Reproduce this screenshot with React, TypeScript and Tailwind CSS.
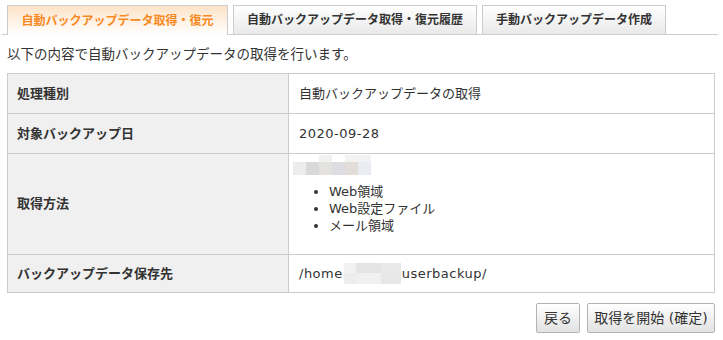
import React from 'react';

const tabs = [
  { label: '自動バックアップデータ取得・復元', active: true, w: 'w-[221px]' },
  { label: '自動バックアップデータ取得・復元履歴', active: false, w: 'w-[244px]' },
  { label: '手動バックアップデータ作成', active: false, w: 'w-[184px]' },
];

// mosaic used to hide private text in the original screen
const Mosaic: React.FC<{ rows: string[][]; cell: number }> = ({ rows, cell }) => (
  <div className="flex flex-col">
    {rows.map((r, i) => (
      <div key={i} className="flex">
        {r.map((c, j) => (
          <div key={j} style={{ width: cell, height: i === 0 ? 7 : 13, background: c }} />
        ))}
      </div>
    ))}
  </div>
);

const Row: React.FC<{ label: string; h: string; children: React.ReactNode }> = ({ label, h, children }) => (
  <div className={`flex border-t border-[#cccccc] first:border-t-0 ${h}`}>
    <div className="w-[281px] shrink-0 bg-[#f0f0f0] border-r border-[#cccccc] flex items-center pl-[9px] font-bold text-[#333]">
      {label}
    </div>
    <div className="flex-1 flex items-center pl-[10px] text-[#333]">{children}</div>
  </div>
);

const App: React.FC = () => {
  return (
    <div
      className="w-[723px] h-[340px] bg-white text-[13px] text-[#333]"
      style={{ fontFamily: '"DejaVu Sans", "Noto Sans CJK JP", sans-serif' }}
    >
      {/* tabs */}
      <div className="pt-[5px] ml-[2px] w-[716px] h-[35px] border-b border-[#cccccc] flex items-start gap-[5px] pl-[5px]">
        {tabs.map((t) => (
          <div
            key={t.label}
            className={
              (t.active
                ? 'h-[30px] bg-gradient-to-b from-[#fde3c8] to-white text-[#f7891f] '
                : 'h-[29px] bg-gradient-to-b from-white to-[#e9e9e9] text-[#333] ') +
              t.w +
              ' shrink-0 flex items-center justify-center border border-b-0 border-[#cccccc] font-bold text-[12px] whitespace-nowrap'
            }
          >
            {t.label}
          </div>
        ))}
      </div>

      <p className="px-[7px] mt-[9px] h-[20px] leading-[20px] text-[13.5px] whitespace-nowrap">
        以下の内容で自動バックアップデータの取得を行います。
      </p>

      <div className="mx-[7px] mt-[9px] w-[708px] border border-[#cccccc]">
        <Row label="処理種別" h="h-[39px]">自動バックアップデータの取得</Row>
        <Row label="対象バックアップ日" h="h-[40px]">
          <span className="tracking-[0.5px]">2020-09-28</span>
        </Row>
        <Row label="取得方法" h="h-[101px]">
          <div className="-ml-[6px] flex flex-col self-start pt-[1px]">
            <Mosaic
              cell={13}
              rows={[
                ['#ffffff', '#ffffff', '#f1f1f1', '#ffffff', '#f3f3f3', '#f0f2f4'],
                ['#ececec', '#d9d9da', '#e4e2df', '#dcdce2', '#e2ddd8', '#e9edf1'],
              ]}
            />
            <ul className="list-disc pl-[36px] mt-[8px] leading-[17px]">
              <li>Web領域</li>
              <li>Web設定ファイル</li>
              <li>メール領域</li>
            </ul>
          </div>
        </Row>
        <Row label="バックアップデータ保存先" h="h-[38px]">
          <span className="tracking-[0.5px]">/home</span>
          <div className="flex flex-col mx-[1px]">
            <div className="flex">
              <div className="w-[12px] h-[10px] bg-[#f2f2f2]" />
              <div className="w-[25px] h-[10px] bg-[#e4e4e4]" />
              <div className="w-[20px] h-[10px] bg-[#e9e9e9]" />
            </div>
            <div className="flex">
              <div className="w-[12px] h-[11px] bg-[#ededed]" />
              <div className="w-[25px] h-[11px] bg-[#f0f0f0]" />
              <div className="w-[20px] h-[11px] bg-[#e7e7e7]" />
            </div>
          </div>
          <span className="tracking-[0.5px]">userbackup/</span>
        </Row>
      </div>

      <div className="w-[715px] flex justify-end gap-[7px] mt-[10px]">
        <button className="h-[30px] w-[44px] border border-[#b3b3b3] rounded-[2px] bg-gradient-to-b from-white to-[#e2e2e2] text-[14px] text-[#333]">
          戻る
        </button>
        <button className="h-[30px] w-[128px] border border-[#b3b3b3] rounded-[2px] bg-gradient-to-b from-white to-[#e2e2e2] text-[14px] text-[#333] whitespace-nowrap">
          取得を開始 (確定)
        </button>
      </div>
    </div>
  );
};

export default App;
